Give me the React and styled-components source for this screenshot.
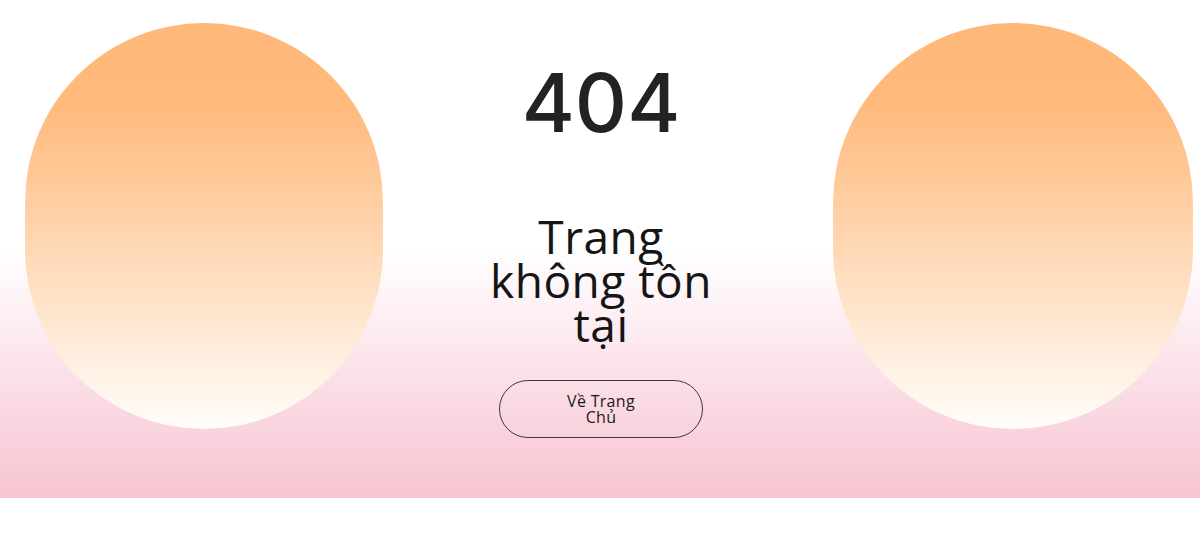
import React from "react";
import styled, { createGlobalStyle } from "styled-components";

const Global = createGlobalStyle`
  html, body { margin: 0; padding: 0; background: #ffffff; }
  body { font-family: "Liberation Sans", Arial, sans-serif; }
`;

const Section = styled.section`
  display: grid;
  grid-template-columns: 358px 1fr 360px;
  align-items: start;
  height: 498px;
  box-sizing: border-box;
  padding: 23px 7px 0 25px;
  background: linear-gradient(180deg, #ffffff 0%, #ffffff 50%, #f7c3d1 100%);
`;

const Blob = styled.div`
  width: 100%;
  height: 406px;
  border-radius: 180px;
  background: linear-gradient(180deg, #ffb87a 0%, #ffb97b 19%, #fffdfa 100%);
`;

const Center = styled.div`
  display: flex;
  flex-direction: column;
  align-items: center;
  padding-right: 14px;
`;

const Code = styled.h1`
  margin: 40px 0 0;
  font-family: Inter, "Liberation Sans", sans-serif;
  font-weight: 500;
  font-size: 81px;
  line-height: 81px;
  color: #222222;
`;

const Title = styled.h2`
  margin: 70px 0 0;
  width: 240px;
  text-align: center;
  font-family: "Open Sans", sans-serif;
  font-weight: 400;
  font-size: 46px;
  line-height: 44px;
  letter-spacing: 0.5px;
  color: #151515;
`;

const HomeButton = styled.a`
  margin-top: 34px;
  box-sizing: border-box;
  width: 204px;
  height: 58px;
  padding: 0 58px;
  display: flex;
  align-items: center;
  justify-content: center;
  text-align: center;
  border: 1px solid #3a3a3a;
  border-radius: 30px;
  font-family: "Open Sans", sans-serif;
  font-size: 16px;
  line-height: 16px;
  letter-spacing: 0.3px;
  color: #1a1a1a;
  text-decoration: none;
  cursor: pointer;
`;

export default function App() {
  return (
    <>
      <Global />
      <Section>
        <Blob />
        <Center>
          <Code>404</Code>
          <Title>Trang không tồn tại</Title>
          <HomeButton href="#">Về Trang Chủ</HomeButton>
        </Center>
        <Blob />
      </Section>
    </>
  );
}
